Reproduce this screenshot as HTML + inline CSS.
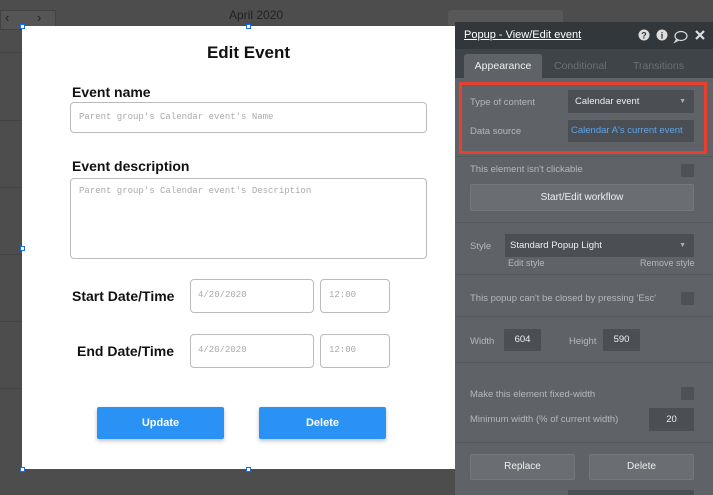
<!DOCTYPE html>
<html><head><style>
*{box-sizing:border-box;margin:0;padding:0}
body{width:713px;height:495px;overflow:hidden;background:#4d4d4d;font-family:"Liberation Sans",sans-serif;position:relative}
.a{position:absolute}
.mono{font-family:"Liberation Mono",monospace;color:#aaa;font-size:9px}
.inp{position:absolute;border:1px solid #bbb;border-radius:4px;background:#fff}
.lbl{position:absolute;font-weight:bold;color:#111;font-size:14px}
.btn{position:absolute;background:#2a91f5;color:#fff;font-weight:bold;font-size:11px;text-align:center;line-height:32px;border-radius:2px;box-shadow:0 2px 4px rgba(0,0,0,.25)}
.p{color:#b4b7ba;font-size:9.5px;position:absolute}
.sep{position:absolute;left:455px;width:258px;height:1px;background:#55595e}
.cb{position:absolute;width:13px;height:13px;background:#4e5257;left:681px}
.dk{position:absolute;background:#4b4f54;color:#eee;font-size:9.5px}
.gb{position:absolute;background:#6a6e72;border:1px solid #74787c;color:#eee;font-size:10px;text-align:center;border-radius:2px}
</style></head><body>
<div class="a" style="left:0;top:10px;width:56px;height:20px;background:#555;border:1px solid #444"></div>
<div class="a" style="left:5px;top:10px;color:#222;font-size:13px">‹</div>
<div class="a" style="left:37px;top:10px;color:#222;font-size:13px">›</div>
<div class="a" style="left:229px;top:8px;color:#222;font-size:12px">April 2020</div>
<div class="a" style="left:0;top:52px;width:22px;height:1px;background:#444"></div>
<div class="a" style="left:0;top:120px;width:22px;height:1px;background:#444"></div>
<div class="a" style="left:0;top:187px;width:22px;height:1px;background:#444"></div>
<div class="a" style="left:0;top:254px;width:22px;height:1px;background:#444"></div>
<div class="a" style="left:0;top:321px;width:22px;height:1px;background:#444"></div>
<div class="a" style="left:0;top:388px;width:22px;height:1px;background:#444"></div>
<div class="a" style="left:448px;top:10px;width:115px;height:16px;background:#585858;border-radius:3px"></div>
<div class="a" style="left:22px;top:26px;width:433px;height:443px;background:#fff"></div>
<div class="a" style="left:20px;top:24px;width:5px;height:5px;border:1px solid #1a6af0;background:#fff"></div>
<div class="a" style="left:246px;top:24px;width:5px;height:5px;border:1px solid #1a6af0;background:#fff"></div>
<div class="a" style="left:20px;top:246px;width:5px;height:5px;border:1px solid #1a6af0;background:#fff"></div>
<div class="a" style="left:20px;top:467px;width:5px;height:5px;border:1px solid #1a6af0;background:#fff"></div>
<div class="a" style="left:246px;top:467px;width:5px;height:5px;border:1px solid #1a6af0;background:#fff"></div>
<div class="a" style="left:22px;top:43px;width:453px;text-align:center;font-weight:bold;font-size:17px;color:#111">Edit Event</div>
<div class="lbl" style="left:72px;top:84px">Event name</div>
<div class="inp" style="left:70px;top:102px;width:357px;height:31px"><span class="mono a" style="left:8px;top:9px">Parent group's Calendar event's Name</span></div>
<div class="lbl" style="left:72px;top:158px">Event description</div>
<div class="inp" style="left:70px;top:178px;width:357px;height:81px"><span class="mono a" style="left:8px;top:7px">Parent group's Calendar event's Description</span></div>
<div class="lbl" style="left:72px;top:288px">Start Date/Time</div>
<div class="inp" style="left:190px;top:279px;width:124px;height:34px"><span class="mono a" style="left:7px;top:10px">4/20/2020</span></div>
<div class="inp" style="left:320px;top:279px;width:70px;height:34px"><span class="mono a" style="left:8px;top:10px">12:00</span></div>
<div class="lbl" style="left:77px;top:343px">End Date/Time</div>
<div class="inp" style="left:190px;top:334px;width:124px;height:34px"><span class="mono a" style="left:7px;top:10px">4/20/2020</span></div>
<div class="inp" style="left:320px;top:334px;width:70px;height:34px"><span class="mono a" style="left:8px;top:10px">12:00</span></div>
<div class="btn" style="left:97px;top:407px;width:127px;height:32px">Update</div>
<div class="btn" style="left:259px;top:407px;width:127px;height:32px">Delete</div>
<div class="a" style="left:455px;top:22px;width:258px;height:473px;background:#5f6368"></div>
<div class="a" style="left:455px;top:22px;width:258px;height:27px;background:#32373b"></div>
<div class="a" style="left:464px;top:29px;color:#fff;font-size:11px;text-decoration:underline">Popup - View/Edit event</div>
<svg class="a" style="left:638px;top:28px" width="72" height="16" viewBox="0 0 72 16">
<circle cx="6" cy="7" r="5.5" fill="#ddd"/><text x="6" y="10.5" font-size="9" font-weight="bold" text-anchor="middle" fill="#32373b" font-family="Liberation Sans">?</text>
<circle cx="24" cy="7" r="5.5" fill="#ddd"/><text x="24" y="10.5" font-size="9" font-weight="bold" text-anchor="middle" fill="#32373b" font-family="Liberation Serif">i</text>
<ellipse cx="43" cy="8" rx="6" ry="4.5" fill="none" stroke="#ddd" stroke-width="1.2"/><path d="M39 11 L37 14 L41 12" fill="none" stroke="#ddd" stroke-width="1.2"/>
<path d="M58 3 L66 11 M66 3 L58 11" stroke="#ddd" stroke-width="2.2"/>
</svg>
<div class="a" style="left:455px;top:49px;width:258px;height:29px;background:#3f4448"></div>
<div class="a" style="left:464px;top:54px;width:78px;height:25px;background:#5f6368;border-radius:3px 3px 0 0;color:#eee;font-size:10.5px;text-align:center;line-height:24px">Appearance</div>
<div class="a" style="left:554px;top:60px;color:#6b7075;font-size:10.5px">Conditional</div>
<div class="a" style="left:633px;top:60px;color:#6b7075;font-size:10.5px">Transitions</div>
<div class="a" style="left:459px;top:82px;width:248px;height:72px;border:3px solid #e8402f"></div>
<div class="p" style="left:470px;top:97px">Type of content</div>
<div class="dk" style="left:568px;top:90px;width:126px;height:23px;line-height:23px;padding-left:7px">Calendar event<span style="position:absolute;right:8px;font-size:7px;color:#aaa">▼</span></div>
<div class="p" style="left:470px;top:126px">Data source</div>
<div class="dk" style="left:568px;top:120px;width:126px;height:22px;line-height:22px;padding-left:3px;color:#5aa5ef">Calendar A's current event</div>
<div class="sep" style="top:156px"></div>
<div class="p" style="left:470px;top:164px">This element isn't clickable</div>
<div class="cb" style="top:164px"></div>
<div class="gb" style="left:470px;top:184px;width:224px;height:27px;line-height:25px">Start/Edit workflow</div>
<div class="sep" style="top:222px"></div>
<div class="p" style="left:470px;top:241px">Style</div>
<div class="dk" style="left:505px;top:234px;width:189px;height:23px;line-height:23px;padding-left:5px">Standard Popup Light<span style="position:absolute;right:8px;font-size:7px;color:#aaa">▼</span></div>
<div class="p" style="left:508px;top:258px;font-size:9px">Edit style</div>
<div class="p" style="left:640px;top:258px;font-size:9px">Remove style</div>
<div class="sep" style="top:274px"></div>
<div class="p" style="left:470px;top:293px">This popup can't be closed by pressing 'Esc'</div>
<div class="cb" style="top:292px"></div>
<div class="sep" style="top:316px"></div>
<div class="p" style="left:470px;top:336px">Width</div>
<div class="dk" style="left:504px;top:329px;width:37px;height:22px;line-height:22px;text-align:center">604</div>
<div class="p" style="left:569px;top:336px">Height</div>
<div class="dk" style="left:603px;top:329px;width:37px;height:22px;line-height:22px;text-align:center">590</div>
<div class="sep" style="top:362px"></div>
<div class="p" style="left:470px;top:389px">Make this element fixed-width</div>
<div class="cb" style="top:387px"></div>
<div class="p" style="left:470px;top:414px">Minimum width (% of current width)</div>
<div class="dk" style="left:649px;top:408px;width:45px;height:23px;line-height:23px;text-align:center">20</div>
<div class="sep" style="top:442px"></div>
<div class="gb" style="left:470px;top:454px;width:105px;height:26px;line-height:24px">Replace</div>
<div class="gb" style="left:589px;top:454px;width:105px;height:26px;line-height:24px">Delete</div>
<div class="dk" style="left:568px;top:490px;width:126px;height:5px"></div>
</body></html>
